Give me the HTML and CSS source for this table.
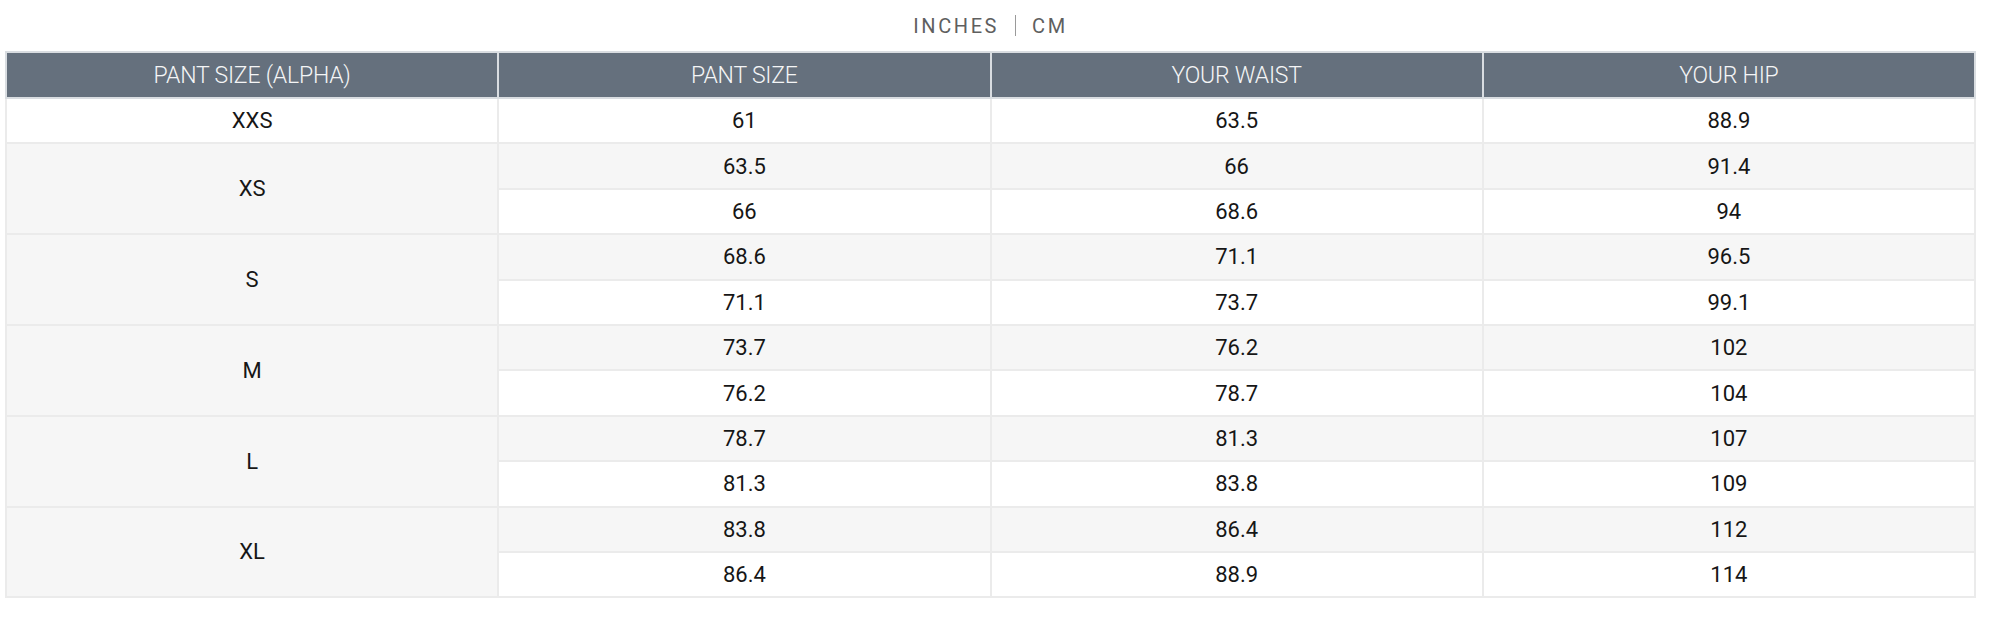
FILE: index.html
```html
<!DOCTYPE html>
<html lang="en">
<head>
<meta charset="utf-8">
<title>Size chart</title>
<link rel="stylesheet" href="styles.css">
</head>
<body>
<div class="chart">
  <div class="units">
    <span class="unit">INCHES</span>
    <span class="sep"></span>
    <span class="unit">CM</span>
  </div>
  <table class="sizes">
    <thead>
      <tr><th>PANT SIZE (ALPHA)</th><th>PANT SIZE</th><th>YOUR WAIST</th><th>YOUR HIP</th></tr>
    </thead>
    <tbody>
      <tr><td>XXS</td><td>61</td><td>63.5</td><td>88.9</td></tr>
      <tr><td rowspan="2">XS</td><td>63.5</td><td>66</td><td>91.4</td></tr>
      <tr><td>66</td><td>68.6</td><td>94</td></tr>
      <tr><td rowspan="2">S</td><td>68.6</td><td>71.1</td><td>96.5</td></tr>
      <tr><td>71.1</td><td>73.7</td><td>99.1</td></tr>
      <tr><td rowspan="2">M</td><td>73.7</td><td>76.2</td><td>102</td></tr>
      <tr><td>76.2</td><td>78.7</td><td>104</td></tr>
      <tr><td rowspan="2">L</td><td>78.7</td><td>81.3</td><td>107</td></tr>
      <tr><td>81.3</td><td>83.8</td><td>109</td></tr>
      <tr><td rowspan="2">XL</td><td>83.8</td><td>86.4</td><td>112</td></tr>
      <tr><td>86.4</td><td>88.9</td><td>114</td></tr>
    </tbody>
  </table>
</div>
</body>
</html>
```
FILE: styles.css
```css
html, body {
  margin: 0;
  padding: 0;
  background: #fff;
}
body {
  font-family: Roboto, "Liberation Sans", sans-serif;
}
.chart {
  margin-left: 5px;
  width: 1971px;
}
.units {
  height: 51px;
  display: flex;
  align-items: center;
  justify-content: center;
  gap: 16px;
  color: #5f5f5f;
  font-size: 20px;
  letter-spacing: 2.6px;
}
.sep {
  width: 1px;
  height: 21px;
  background: #9a9a9a;
}
.sizes {
  width: 100%;
  border-collapse: collapse;
  table-layout: fixed;
  border: 2px solid #ebebeb;
}
.sizes th {
  background: #65707d;
  color: #f4f5f6;
  font-weight: 300;
  font-size: 23px;
  height: 44px;
  padding: 0;
  border: 2px solid #d9dde1;
  letter-spacing: -0.2px;
}
.sizes td {
  height: 43.4px;
  padding: 0;
  text-align: center;
  font-size: 22px;
  color: #161616;
  border: 2px solid #ebebeb;
}
.sizes tbody tr:nth-child(even) {
  background: #f6f6f6;
}
```
